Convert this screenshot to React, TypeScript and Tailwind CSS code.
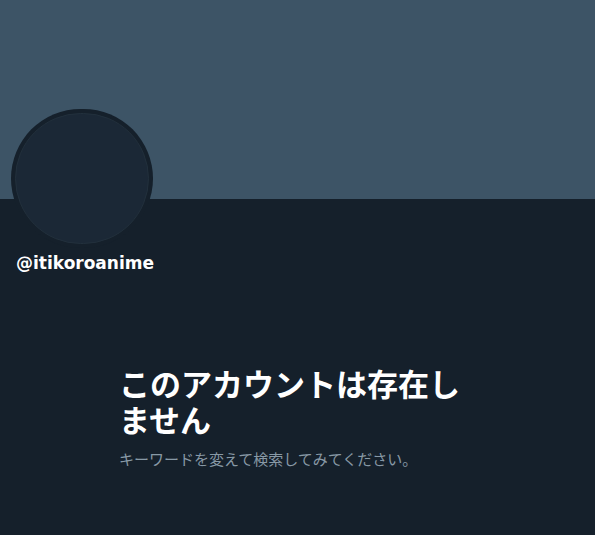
export default function App() {
  return (
    <div
      className="min-h-[535px] w-full bg-[#15202b] text-white"
      style={{ fontFamily: '"Liberation Sans", "Noto Sans CJK JP", sans-serif' }}
    >
      <div className="h-[199px] w-full bg-[#3d5466]" />
      <div className="-mt-[90px] pl-[11px]">
        <div className="h-[139px] w-[142px] rounded-full bg-[#15202b] p-[4px]">
          <div className="h-full w-full rounded-full border border-[#22303c] bg-[#1b2836]" />
        </div>
      </div>
      <div className="mt-[5px] pl-[16px] font-['DejaVu_Sans',sans-serif] text-[17px] font-bold leading-[20px]">
        @itikoroanime
      </div>
      <div className="mx-auto mt-[95px] w-[357px]">
        <h1 className="text-[31px] font-bold leading-[36px]">このアカウントは存在しません</h1>
        <p className="mt-[10px] text-[15px] leading-[20px] text-[#8899a6]">
          キーワードを変えて検索してみてください。
        </p>
      </div>
    </div>
  );
}
